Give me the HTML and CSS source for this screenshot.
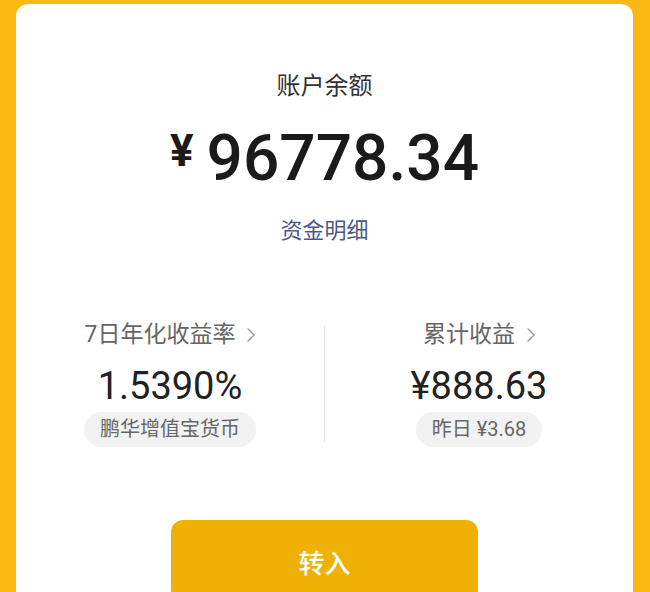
FILE: index.html
```html
<!DOCTYPE html>
<html lang="zh-CN">
    <head>
        <meta charset="UTF-8">
        <meta name="viewport" content="width=device-width,initial-scale=1.0">
        <title>账户余额</title>
        <link rel="stylesheet" href="styles.css">
    </head>
    <body>
        <div class="card">
            <div class="balance">
                <div class="balance-label">账户余额</div>
                <div class="balance-amount"><span class="currency">¥</span>96778.34</div>
                <a class="detail-link" href="#">资金明细</a>
            </div>
            <div class="stats">
                <div class="stat">
                    <div class="stat-title">7日年化收益率
                        <svg class="chevron" width="8" height="14" viewBox="0 0 8 14"><path d="M1 1l6 6-6 6" fill="none" stroke="#9a9a9a" stroke-width="1.4" stroke-linecap="round" stroke-linejoin="round"/></svg>
                    </div>
                    <div class="stat-value">1.5390%</div>
                    <div class="stat-tag">鹏华增值宝货币</div>
                </div>
                <div class="divider"></div>
                <div class="stat">
                    <div class="stat-title">累计收益
                        <svg class="chevron" width="8" height="14" viewBox="0 0 8 14"><path d="M1 1l6 6-6 6" fill="none" stroke="#9a9a9a" stroke-width="1.4" stroke-linecap="round" stroke-linejoin="round"/></svg>
                    </div>
                    <div class="stat-value">¥888.63</div>
                    <div class="stat-tag">昨日 ¥3.68</div>
                </div>
            </div>
            <div class="actions">
                <button class="btn-in">转入</button>
            </div>
        </div>
    </body>
</html>
```

FILE: styles.css
```css
body {
    margin: 0;
    height: 592px;
    overflow: hidden;
    background: #fbb714;
    font-family: Roboto, "Noto Sans CJK SC", sans-serif;
}

.card {
    margin: 4px 17px 0 16px;
    height: 588px;
    background: #fff;
    border-radius: 12px 12px 0 0;
    padding-top: 66px;
    box-sizing: border-box;
    overflow: hidden;
}

.balance {
    display: flex;
    flex-direction: column;
    align-items: center;
}

.balance-label {
    font-size: 24px;
    line-height: 32px;
    color: #333;
}

.balance-amount {
    margin-top: 18px;
    font-size: 64px;
    line-height: 62px;
    font-weight: 500;
    color: #1a1a1a;
}

.currency {
    font-size: 44px;
    font-weight: 700;
    vertical-align: 14px;
    margin-right: 13px;
}

.detail-link {
    margin-top: 26px;
    font-size: 22px;
    line-height: 30px;
    color: #4b5a85;
    text-decoration: none;
}

.stats {
    display: flex;
    align-items: center;
    margin-top: 74px;
}

.stat {
    flex: 1;
    display: flex;
    flex-direction: column;
    align-items: center;
}

.divider {
    width: 1px;
    height: 117px;
    background: #e6e6e6;
}

.stat-title {
    display: flex;
    align-items: center;
    gap: 12px;
    font-size: 23px;
    line-height: 30px;
    color: #666;
}

.stat-value {
    margin-top: 14px;
    font-size: 38px;
    line-height: 44px;
    color: #222;
}

.stat-tag {
    margin-top: 4px;
    padding: 0 16px;
    height: 35px;
    line-height: 35px;
    border-radius: 18px;
    background: #f2f2f2;
    font-size: 20px;
    color: #666;
}

.actions {
    display: flex;
    justify-content: center;
    margin-top: 73px;
}

.btn-in {
    width: 307px;
    height: 82px;
    border: none;
    border-radius: 12px;
    background: #efb106;
    color: #fff;
    font-family: inherit;
    font-size: 26px;
    font-weight: 500;
    cursor: pointer;
}
```
